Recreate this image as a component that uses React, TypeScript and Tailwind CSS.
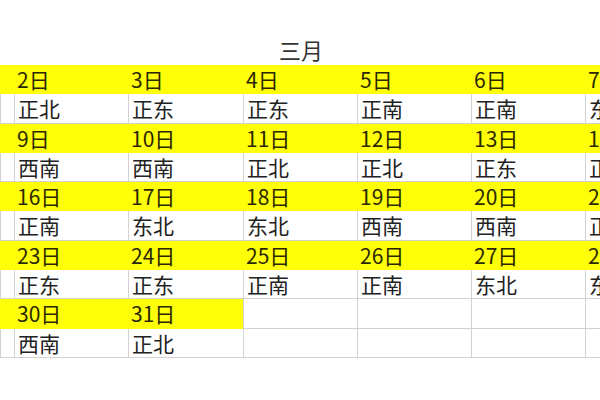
const weeks: { dates: string[]; dirs: string[]; yellowUpTo: number }[] = [
  { dates: ['', '2日', '3日', '4日', '5日', '6日', '7日'], dirs: ['', '正北', '正东', '正东', '正南', '正南', '东南'], yellowUpTo: 7 },
  { dates: ['', '9日', '10日', '11日', '12日', '13日', '14日'], dirs: ['', '西南', '西南', '正北', '正北', '正东', '正北'], yellowUpTo: 7 },
  { dates: ['', '16日', '17日', '18日', '19日', '20日', '21日'], dirs: ['', '正南', '东北', '东北', '西南', '西南', '正东'], yellowUpTo: 7 },
  { dates: ['', '23日', '24日', '25日', '26日', '27日', '28日'], dirs: ['', '正东', '正东', '正南', '正南', '东北', '东北'], yellowUpTo: 7 },
  { dates: ['', '30日', '31日', '', '', '', ''], dirs: ['', '西南', '正北', '', '', '', ''], yellowUpTo: 3 },
]

function DateCell({ text, yellow }: { text: string; yellow: boolean }) {
  return (
    <div
      className={
        yellow
          ? 'h-[29.3px] bg-[#ffff0a] pl-[3px] leading-[29px] text-[#2b2800] whitespace-nowrap overflow-hidden'
          : 'h-[29.3px] bg-white border-l border-b border-[#d2d2d2] pl-[3px] leading-[29px] whitespace-nowrap overflow-hidden'
      }
    >
      {text}
    </div>
  )
}

function DirCell({ text }: { text: string }) {
  return (
    <div className="h-[29.3px] bg-white border-l border-b border-[#d2d2d2] pl-[3px] leading-[29px] text-[#222] whitespace-nowrap overflow-hidden">
      {text}
    </div>
  )
}

export default function App() {
  return (
    <div
      className="w-[600px] h-[400px] bg-white overflow-hidden"
      style={{ fontFamily: '"Noto Sans CJK SC", "Noto Sans", sans-serif' }}
    >
      <div className="h-[65px] flex items-end justify-center pb-[1px]">
        <span className="text-[22px] leading-[30px] text-[#333] pl-[2px]">三月</span>
      </div>
      <div className="grid grid-cols-[14px_114px_115px_114px_114px_114px_1fr] text-[21px]">
        {weeks.map((w, wi) => (
          <div key={wi} className="contents">
            {w.dates.map((d, i) => (
              <DateCell key={'d' + i} text={d} yellow={i < w.yellowUpTo} />
            ))}
            {w.dirs.map((d, i) => (
              <DirCell key={'r' + i} text={d} />
            ))}
          </div>
        ))}
      </div>
    </div>
  )
}
